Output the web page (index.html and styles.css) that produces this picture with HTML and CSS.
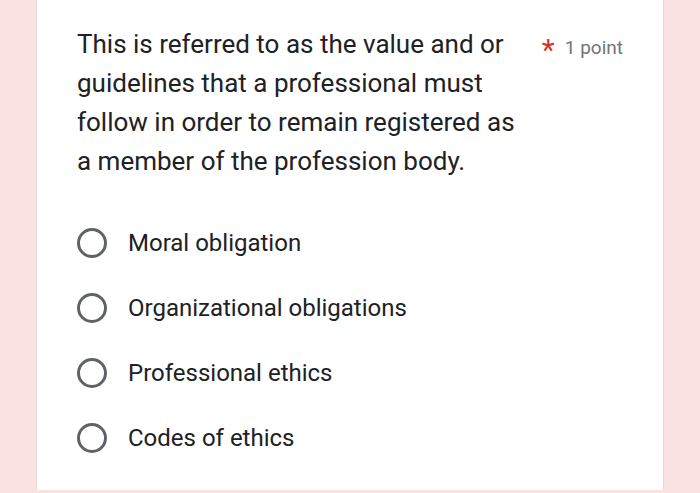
FILE: index.html
```html
<!DOCTYPE html>
<html lang="en">
<head>
<meta charset="utf-8">
<title>Question</title>
<link rel="stylesheet" href="styles.css">
</head>
<body>
<div class="page">
  <div class="card">
    <div class="header">
      <div class="question">This is referred to as the value and or guidelines that a professional must follow in order to remain registered as a member of the profession body.</div>
      <div class="points"><span class="star">*</span><span class="pts">1 point</span></div>
    </div>
    <div class="options">
      <div class="option"><span class="radio"></span><span class="label">Moral obligation</span></div>
      <div class="option"><span class="radio"></span><span class="label">Organizational obligations</span></div>
      <div class="option"><span class="radio"></span><span class="label">Professional ethics</span></div>
      <div class="option"><span class="radio"></span><span class="label">Codes of ethics</span></div>
    </div>
  </div>
</div>
</body>
</html>
```

FILE: styles.css
```css
html, body {
  margin: 0;
  padding: 0;
  height: 100%;
}
body {
  background: #fbe2e2;
  font-family: Roboto, "Noto Sans", Arial, sans-serif;
  color: #202124;
}
.page {
  height: 493px;
  display: flex;
  justify-content: flex-start;
  padding-left: 36px;
  overflow: hidden;
}
.card {
  width: 628px;
  height: 490px;
  background: #ffffff;
  border-left: 1px solid #e2d9d9;
  border-right: 1px solid #e2d9d9;
  padding: 25px 40px 0 40px;
  box-sizing: border-box;
}
.header {
  display: flex;
  align-items: flex-start;
  justify-content: space-between;
}
.question {
  width: 450px;
  font-size: 26px;
  line-height: 39px;
  color: #202124;
}
.points {
  display: flex;
  align-items: flex-start;
  gap: 10px;
  padding-top: 8px;
}
.star {
  color: #d93025;
  font-size: 30px;
  line-height: 30px;
  margin-top: 2px;
}
.pts {
  color: #70757a;
  font-size: 19px;
  line-height: 30px;
}
.options {
  margin-top: 29px;
  display: flex;
  flex-direction: column;
}
.option {
  height: 65px;
  display: flex;
  align-items: center;
}
.radio {
  width: 30px;
  height: 30px;
  border: 3px solid #5f6368;
  border-radius: 50%;
  box-sizing: border-box;
  margin-right: 21px;
  flex-shrink: 0;
}
.label {
  font-size: 24px;
  color: #202124;
}
```
